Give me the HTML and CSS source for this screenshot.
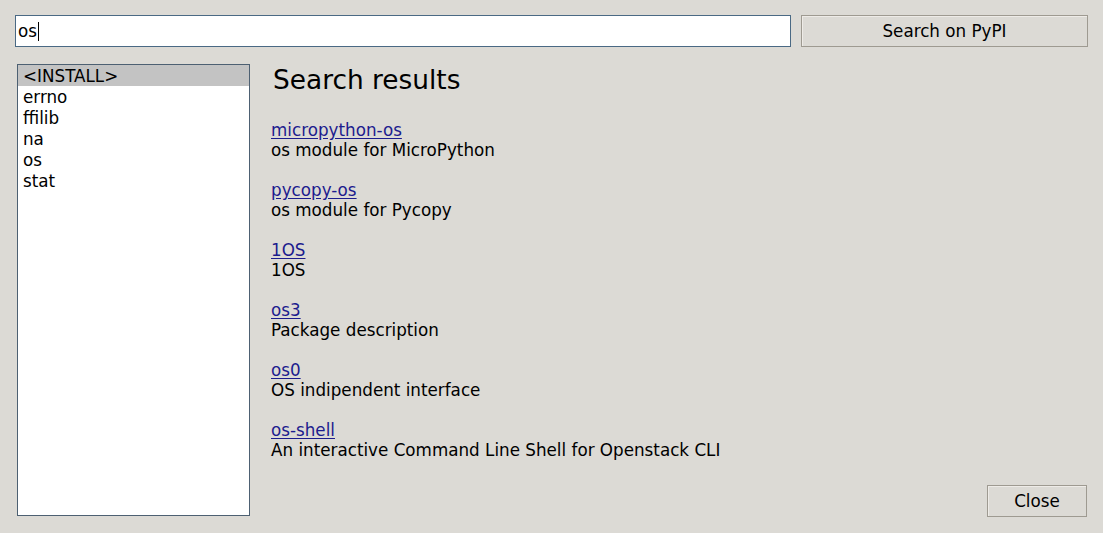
FILE: index.html
```html
<!DOCTYPE html>
<html>
<head>
<meta charset="utf-8">
<link rel="stylesheet" href="styles.css">
</head>
<body>
<div class="window">
  <div class="topbar">
    <div class="entry"><span class="entry-text">os</span><span class="caret"></span></div>
    <div class="btn search-btn">Search on PyPI</div>
  </div>
  <div class="main">
    <div class="listbox">
      <div class="row selected">&lt;INSTALL&gt;</div>
      <div class="row">errno</div>
      <div class="row">ffilib</div>
      <div class="row">na</div>
      <div class="row">os</div>
      <div class="row">stat</div>
    </div>
    <div class="content">
      <h1 class="title">Search results</h1>
      <div class="results">
        <div class="result"><a class="link" href="#">micropython-os</a><div class="desc">os module for MicroPython</div></div>
        <div class="result"><a class="link" href="#">pycopy-os</a><div class="desc">os module for Pycopy</div></div>
        <div class="result"><a class="link" href="#">1OS</a><div class="desc">1OS</div></div>
        <div class="result"><a class="link" href="#">os3</a><div class="desc">Package description</div></div>
        <div class="result"><a class="link" href="#">os0</a><div class="desc">OS indipendent interface</div></div>
        <div class="result"><a class="link" href="#">os-shell</a><div class="desc">An interactive Command Line Shell for Openstack CLI</div></div>
      </div>
      <div class="btn close-btn">Close</div>
    </div>
  </div>
</div>
</body>
</html>
```

FILE: styles.css
```css
html, body {
  margin: 0;
  padding: 0;
  background: #dcdad5;
}
body {
  font-family: "DejaVu Sans", sans-serif;
  font-size: 16.75px;
  color: #000;
}
.window {
  width: 1103px;
  height: 533px;
  box-sizing: border-box;
  padding: 15px 15px 0 15px;
}
.topbar {
  display: flex;
  gap: 10px;
  height: 32px;
}
.entry {
  width: 776px;
  height: 32px;
  box-sizing: border-box;
  border: 1px solid #4a6984;
  background: #fff;
  display: flex;
  align-items: center;
  padding-left: 2px;
}
.entry-text {
  line-height: 20px;
}
.caret {
  display: inline-block;
  width: 1px;
  height: 19px;
  background: #000;
  margin-left: 1px;
}
.btn {
  box-sizing: border-box;
  border: 1px solid #9e9a91;
  background: #dcdad5;
  display: flex;
  align-items: center;
  justify-content: center;
  height: 32px;
  box-shadow: inset 1px 1px 0 #eeebe7;
}
.search-btn {
  width: 287px;
}
.main {
  display: flex;
  margin-top: 17px;
  margin-left: 2px;
  height: 453px;
}
.listbox {
  width: 233px;
  height: 452px;
  box-sizing: border-box;
  border: 1px solid #4d6072;
  background: #fff;
}
.row {
  height: 21px;
  line-height: 22px;
  padding-left: 5px;
}
.row.selected {
  background: #c3c3c3;
}
.content {
  flex: 1;
  margin-left: 21px;
  display: flex;
  flex-direction: column;
}
.title {
  margin: 1px 0 0 2px;
  font-size: 26.4px;
  font-weight: normal;
  line-height: 30px;
}
.results {
  margin-top: 25px;
  display: flex;
  flex-direction: column;
  gap: 20px;
}
.result {
  line-height: 20px;
}
.link {
  color: #1c1c8e;
  text-decoration: underline;
  text-underline-offset: 2px;
}
.desc {
  line-height: 20px;
}
.close-btn {
  margin-top: auto;
  align-self: flex-end;
  width: 100px;
  margin-right: 1px;
}
```
